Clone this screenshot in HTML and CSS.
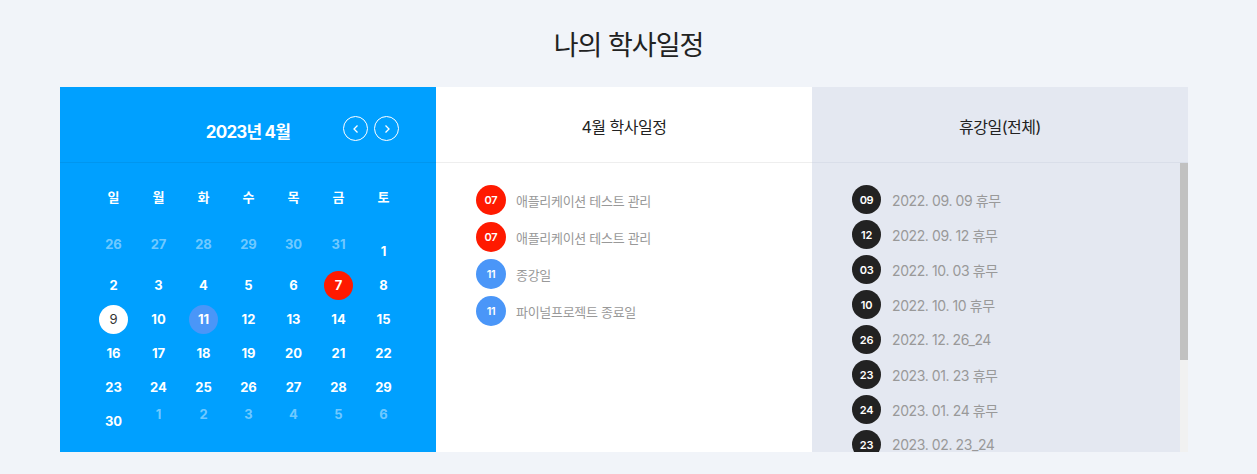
FILE: index.html
```html
<!DOCTYPE html>
<html lang="ko">
<head>
<meta charset="utf-8">
<link rel="stylesheet" href="styles.css">
</head>
<body>
<section class="schedule">
  <h2 class="page-title">나의 학사일정</h2>
  <div class="board">
    <div class="col cal">
      <div class="cal-head">
        <span></span>
        <strong class="cal-title">2023년 4월</strong>
        <div class="nav">
          <button class="nav-btn" aria-label="이전"><svg width="10" height="10" viewBox="0 0 10 10"><path d="M6.5 1.5 3 5l3.5 3.5" fill="none" stroke="#fff" stroke-width="1.3"/></svg></button>
          <button class="nav-btn" aria-label="다음"><svg width="10" height="10" viewBox="0 0 10 10"><path d="M3.5 1.5 7 5 3.5 8.5" fill="none" stroke="#fff" stroke-width="1.3"/></svg></button>
        </div>
      </div>
      <div class="cal-body">
        <div class="week">
          <span>일</span><span>월</span><span>화</span><span>수</span><span>목</span><span>금</span><span>토</span>
        </div>
        <div class="days">
          <span class="d off">26</span><span class="d off">27</span><span class="d off">28</span><span class="d off">29</span><span class="d off">30</span><span class="d off">31</span><span class="d"><i>1</i></span>
          <span class="d"><i>2</i></span><span class="d"><i>3</i></span><span class="d"><i>4</i></span><span class="d"><i>5</i></span><span class="d"><i>6</i></span><span class="d"><i class="red">7</i></span><span class="d"><i>8</i></span>
          <span class="d"><i class="today">9</i></span><span class="d"><i>10</i></span><span class="d"><i class="blue">11</i></span><span class="d"><i>12</i></span><span class="d"><i>13</i></span><span class="d"><i>14</i></span><span class="d"><i>15</i></span>
          <span class="d"><i>16</i></span><span class="d"><i>17</i></span><span class="d"><i>18</i></span><span class="d"><i>19</i></span><span class="d"><i>20</i></span><span class="d"><i>21</i></span><span class="d"><i>22</i></span>
          <span class="d"><i>23</i></span><span class="d"><i>24</i></span><span class="d"><i>25</i></span><span class="d"><i>26</i></span><span class="d"><i>27</i></span><span class="d"><i>28</i></span><span class="d"><i>29</i></span>
          <span class="d"><i>30</i></span><span class="d off">1</span><span class="d off">2</span><span class="d off">3</span><span class="d off">4</span><span class="d off">5</span><span class="d off">6</span>
        </div>
      </div>
    </div>
    <div class="col month">
      <h3 class="col-title">4월 학사일정</h3>
      <ul class="ev-list">
        <li><span class="badge red">07</span>애플리케이션 테스트 관리</li>
        <li><span class="badge red">07</span>애플리케이션 테스트 관리</li>
        <li><span class="badge blue">11</span>종강일</li>
        <li><span class="badge blue">11</span>파이널프로젝트 종료일</li>
      </ul>
    </div>
    <div class="col holiday">
      <h3 class="col-title">휴강일(전체)</h3>
      <div class="scroll">
        <ul class="hol-list">
          <li><span class="badge dark">09</span>2022. 09. 09 휴무</li>
          <li><span class="badge dark">12</span>2022. 09. 12 휴무</li>
          <li><span class="badge dark">03</span>2022. 10. 03 휴무</li>
          <li><span class="badge dark">10</span>2022. 10. 10 휴무</li>
          <li><span class="badge dark">26</span>2022. 12. 26_24</li>
          <li><span class="badge dark">23</span>2023. 01. 23 휴무</li>
          <li><span class="badge dark">24</span>2023. 01. 24 휴무</li>
          <li><span class="badge dark">23</span>2023. 02. 23_24</li>
        </ul>
      </div>
      <div class="scrollbar" aria-hidden="true"><div class="thumb"></div></div>
    </div>
  </div>
</section>
</body>
</html>
```

FILE: styles.css
```css
* { box-sizing: border-box; }
html, body { margin: 0; padding: 0; }
body {
  background: #f1f4f9;
  font-family: Inter, "Noto Sans CJK KR", sans-serif;
  color: #222;
  height: 474px;
  overflow: hidden;
}
.schedule { padding-top: 28px; }
.page-title {
  margin: 0;
  text-align: center;
  font-size: 27px;
  font-weight: 400;
  line-height: 36px;
  letter-spacing: -1px;
  color: #222;
}
.board {
  margin: 23px 69px 0 60px;
  display: grid;
  grid-template-columns: 376px 376px 376px;
  height: 365px;
}
.col { height: 365px; overflow: hidden; }
.cal { background: #00a0ff; color: #fff; }
.cal-head {
  height: 76px;
  border-bottom: 1px solid #0096ef;
  display: grid;
  grid-template-columns: 1fr auto 1fr;
  align-items: center;
  padding-top: 12px;
}
.cal-title {
  font-size: 17px;
  font-weight: 700;
  letter-spacing: -0.8px;
}
.nav { display: flex; gap: 6px; margin-left: 53px; margin-top: -4px; }
.nav-btn {
  width: 25px; height: 25px;
  border-radius: 50%;
  border: 1px solid #fff;
  background: transparent;
  padding: 0;
  display: flex; align-items: center; justify-content: center;
}
.cal-body { padding-top: 16px; }
.week, .days {
  display: grid;
  grid-template-columns: repeat(7, 45px);
  justify-content: center;
  padding-left: 1px;
}
.week span {
  height: 34px;
  display: flex; align-items: center; justify-content: center;
  font-size: 13px; font-weight: 700;
}
.days { margin-top: 21px; }
.d {
  height: 34px;
  display: flex; align-items: center; justify-content: center;
  font-size: 13px; font-weight: 700;
  line-height: 20px;
}
.d.off { align-items: flex-start; color: rgba(255,255,255,0.45); }
.d i {
  font-style: normal;
  width: 29px; height: 29px;
  border-radius: 50%;
  display: flex; align-items: center; justify-content: center;
}
.d i.red { background: #ff1a00; }
.d i.blue { background: #4a96f8; }
.d i.today { background: #fff; color: #333; font-weight: 400; }

.col-title {
  margin: 0;
  height: 76px;
  display: flex; align-items: center; justify-content: center;
  font-size: 16px;
  font-weight: 400;
  letter-spacing: -0.5px;
  color: #222;
  padding-top: 3px;
}
.month { background: #fff; }
.month .col-title { border-bottom: 1px solid #eee; }
.holiday { background: #e4e8f1; position: relative; }
.holiday .col-title { border-bottom: 1px solid #d9dee9; }

ul { list-style: none; margin: 0; padding: 0; }
.ev-list { padding: 22px 0 0 40px; display: flex; flex-direction: column; gap: 7px; }
.ev-list li, .hol-list li {
  display: flex; align-items: center; gap: 10px;
  color: #999;
  font-size: 13px;
  letter-spacing: -0.3px;
}
.hol-list li { font-size: 14px; letter-spacing: -0.4px; gap: 11px; }
.badge {
  width: 30px; height: 30px;
  border-radius: 50%;
  display: flex; align-items: center; justify-content: center;
  color: #fff; font-size: 11px; font-weight: 600;
  letter-spacing: -0.3px;
  flex: none;
}
.badge.red { background: #ff1a00; }
.badge.blue { background: #4a96f8; }
.badge.dark { background: #222; width: 29px; height: 29px; }
.scroll {
  height: 289px;
  overflow: hidden;
}
.hol-list { padding: 22px 0 20px 40px; display: flex; flex-direction: column; gap: 6px; }
.scrollbar {
  position: absolute;
  right: 0;
  top: 76px;
  width: 8px;
  height: 289px;
  background: #f1f1f1;
}
.thumb { height: 197px; background: #c1c1c1; }
```
